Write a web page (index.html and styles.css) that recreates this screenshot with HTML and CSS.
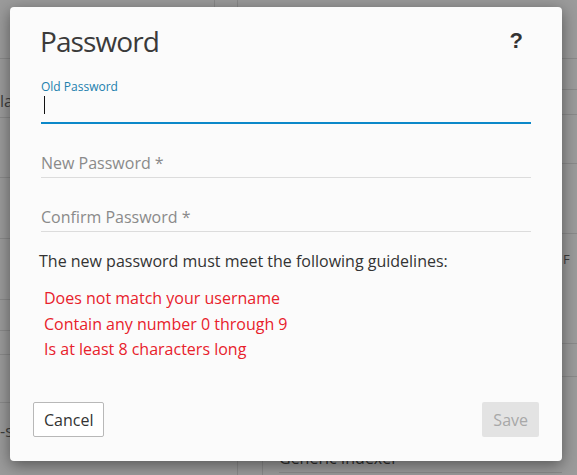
FILE: index.html
```html
<!DOCTYPE html>
<html lang="en">
<head>
<meta charset="utf-8">
<title>Password</title>
<link rel="stylesheet" href="styles.css">
</head>
<body>
<div class="page">
  <div class="col-left">
    <div class="cell l1"></div>
    <div class="cell l2"><span class="frag">la</span></div>
    <div class="cell l3"></div>
    <div class="cell l4"></div>
    <div class="cell l5"></div>
    <div class="cell l6"></div>
    <div class="cell l7"></div>
    <div class="cell l8"></div>
    <div class="cell l9"><span class="frag">-s</span></div>
  </div>
  <div class="col-mid">
    <div class="mid-top">
      <div class="mt1"></div>
      <div class="mt2"></div>
    </div>
    <div class="mid-bottom">
      <div class="mb1"></div>
      <div class="mb2"></div>
      <div class="mb3">Generic Indexer</div>
    </div>
  </div>
  <div class="col-right">
    <div class="cell r1"></div>
    <div class="cell r2"></div>
    <div class="cell r3"></div>
    <div class="cell r4"></div>
    <div class="cell r5"></div>
    <div class="cell r6"><span class="frag-r">F</span></div>
    <div class="cell r7"></div>
  </div>
</div>

<div class="dialog" role="dialog" aria-labelledby="dlg-title">
  <div class="dialog-header">
    <h1 class="dialog-title" id="dlg-title">Password</h1>
    <span class="help">?</span>
  </div>

  <div class="field field-active">
    <div class="field-label">Old Password</div>
    <div class="field-input"><span class="caret"></span></div>
  </div>

  <div class="field field-plain">
    <div class="field-input">New Password *</div>
  </div>

  <div class="field field-plain">
    <div class="field-input">Confirm Password *</div>
  </div>

  <p class="guidelines">The new password must meet the following guidelines:</p>
  <ul class="rules">
    <li>Does not match your username</li>
    <li>Contain any number 0 through 9</li>
    <li>Is at least 8 characters long</li>
  </ul>

  <div class="dialog-footer">
    <button class="btn btn-cancel" type="button">Cancel</button>
    <button class="btn btn-save" type="button" disabled>Save</button>
  </div>
</div>
</body>
</html>
```
FILE: styles.css
```css
html, body {
  margin: 0;
  padding: 0;
}

body {
  width: 577px;
  height: 475px;
  overflow: hidden;
  position: relative;
  background: #9b9b9b;
  font-family: "Open Sans", "Noto Sans", sans-serif;
}

/* dimmed page behind the modal */
.page {
  display: grid;
  grid-template-columns: 10px 1fr 15px;
  height: 475px;
}

.col-left,
.col-right {
  display: flex;
  flex-direction: column;
}

.cell {
  border-bottom: 1px solid #8a8a8a;
  flex: none;
}

.l1 { height: 58px; }
.l2 { height: 58px; }
.l3 { height: 59px; }
.l4 { height: 60px; }
.l5 { height: 60px; }
.l6 { height: 30px; }
.l7 { height: 23px; }
.l8 { height: 47px; }
.l9 { border-bottom: none; flex: 1; }

.r1 { height: 58px; }
.r2 { height: 30px; }
.r3 { height: 24px; }
.r4 { height: 48px; }
.r5 { height: 69px; }
.r6 { height: 109px; }
.r7 { height: 32px; }

.frag {
  display: block;
  font-size: 16px;
  color: #3d3d3d;
  line-height: 24px;
  white-space: nowrap;
}

.l2 .frag { margin-top: 30px; }
.l9 .frag { margin-top: 16px; }

.frag-r {
  display: block;
  font-size: 13px;
  color: #3d3d3d;
  margin-top: 17px;
  padding-left: 1px;
  line-height: 16px;
}

.col-mid {
  display: flex;
  flex-direction: column;
  justify-content: space-between;
}

.mid-top {
  display: flex;
  height: 20px;
}

.mt1 {
  width: 204px;
  border-right: 1px solid #8a8a8a;
}

.mt2 {
  width: 22px;
  border-right: 1px solid #8a8a8a;
}

.mid-bottom {
  display: flex;
  height: 30px;
}

.mb1 {
  width: 227px;
  border-right: 1px solid #8a8a8a;
}

.mb2 {
  width: 24px;
  border-right: 1px solid #8a8a8a;
}

.mb3 {
  flex: 1;
  margin-left: 16px;
  height: 23px;
  padding-top: 4px;
  border-bottom: 1px solid #8a8a8a;
  font-size: 16px;
  line-height: 18px;
  color: #2e2e2e;
  white-space: nowrap;
}

/* modal */
.dialog {
  position: absolute;
  left: 10px;
  top: 7px;
  width: 552px;
  height: 454px;
  box-sizing: border-box;
  padding: 16px 31px 24px 31px;
  background: #fbfbfb;
  border-radius: 4px;
  box-shadow: 0 4px 16px rgba(0, 0, 0, 0.45);
  display: flex;
  flex-direction: column;
}

.dialog-header {
  display: flex;
  justify-content: space-between;
  align-items: flex-start;
  height: 36px;
}

.dialog-title {
  margin: 0 0 0 -1px;
  font-size: 28px;
  font-weight: 400;
  letter-spacing: -0.9px;
  line-height: 36px;
  color: #3a3a3a;
}

.help {
  font-family: "Liberation Sans", Arial, sans-serif;
  font-weight: 700;
  font-size: 22px;
  line-height: 36px;
  color: #333;
  margin-right: 8px;
}

.field-active {
  margin-top: 20px;
}

.field-label {
  font-size: 12px;
  line-height: 16px;
  color: #2180ad;
}

.field-active .field-input {
  box-sizing: border-box;
  height: 29px;
  padding: 1px 0 0 3px;
  border-bottom: 2px solid #0b88c9;
}

.caret {
  display: block;
  width: 1px;
  height: 18px;
  background: #111;
}

.field-plain {
  margin-top: 27px;
}

.field-plain .field-input {
  font-size: 16px;
  line-height: 24px;
  padding-bottom: 2px;
  border-bottom: 1px solid #dcdcdc;
  color: #8a8a8a;
}

.guidelines {
  margin: 17px 0 0 -2px;
  font-size: 16px;
  line-height: 24px;
  color: #333;
}

.rules {
  list-style: none;
  margin: 13px 0 0 0;
  padding: 0 0 0 3px;
  font-size: 16px;
  line-height: 25.6px;
  color: #e8212b;
}

.dialog-footer {
  margin: auto -8px 0 -8px;
  display: flex;
  justify-content: space-between;
  align-items: flex-end;
}

.btn {
  font-family: "Open Sans", "Noto Sans", sans-serif;
  font-size: 16px;
  height: 35px;
  border-radius: 2px;
  box-sizing: border-box;
  line-height: 24px;
}

.btn-cancel {
  background: #fff;
  border: 1px solid #b8b8b8;
  color: #333;
  padding: 0 10px;
}

.btn-save {
  background: #e3e3e3;
  border: none;
  color: #a8a8a8;
  padding: 0 11px;
}
```
